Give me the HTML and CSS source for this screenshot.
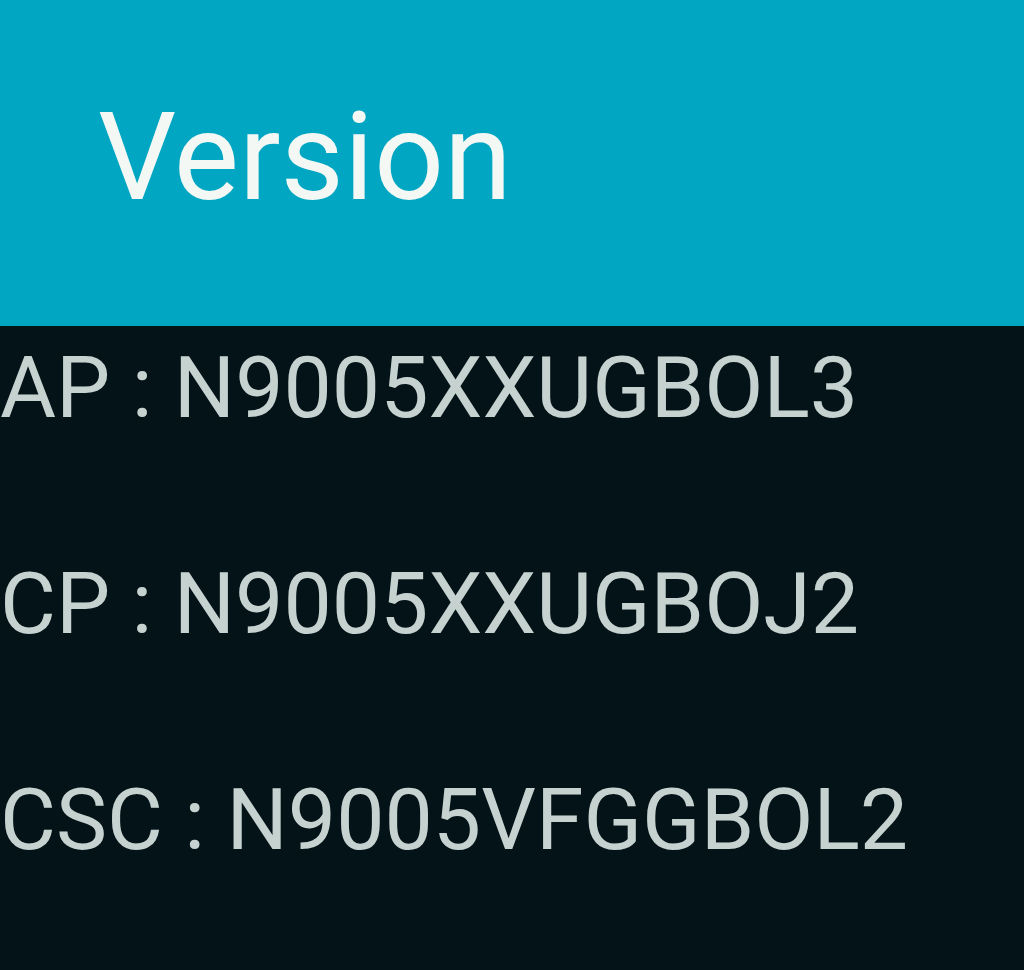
FILE: index.html
```html
<!DOCTYPE html>
<html lang="en">
<head>
    <meta charset="UTF-8">
    <meta name="viewport" content="width=device-width, initial-scale=1.0">
    <title>Version</title>
    <link rel="stylesheet" href="styles.css">
</head>
<body>
    <div class="header">
        <h1 class="title">Version</h1>
    </div>
    <div class="versions">
        <p class="row">AP : N9005XXUGBOL3</p>
        <p class="row">CP : N9005XXUGBOJ2</p>
        <p class="row">CSC : N9005VFGGBOL2</p>
    </div>
</body>
</html>
```

FILE: styles.css
```css
html, body {
    margin: 0;
    padding: 0;
}

body {
    background-color: #031317;
    font-family: Roboto, "Liberation Sans", sans-serif;
    width: 1024px;
    height: 970px;
    overflow: hidden;
}

.header {
    height: 326px;
    background-color: #00a6c2;
    display: flex;
    align-items: center;
    padding-left: 98px;
    box-sizing: border-box;
}

.title {
    margin: 0;
    color: #f4f8f4;
    font-size: 123px;
    font-weight: 400;
    line-height: 1;
    padding-bottom: 12px;
}

.versions {
    display: flex;
    flex-direction: column;
}

.row {
    margin: 0;
    color: #c6d2d0;
    font-size: 86px;
    line-height: 216px;
    height: 216px;
}

.row:first-child {
    margin-top: -46px;
}
```
